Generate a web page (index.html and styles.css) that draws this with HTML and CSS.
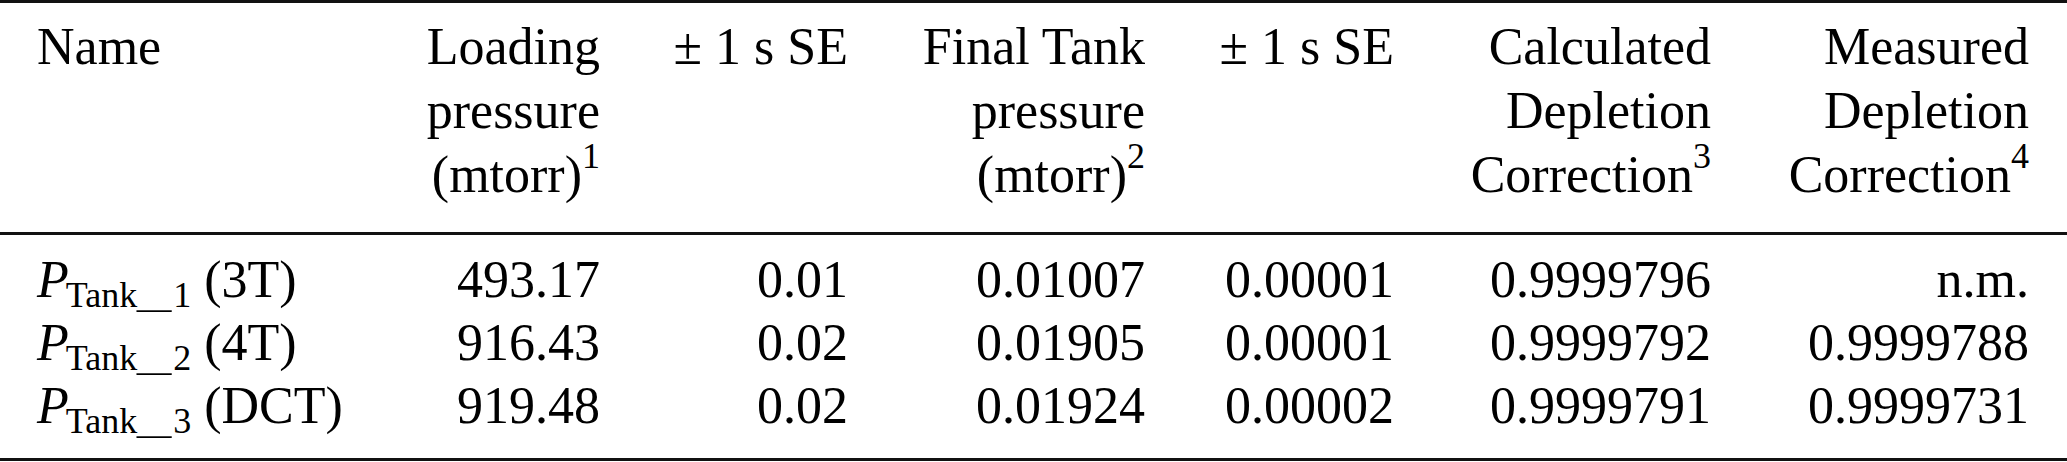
FILE: index.html
```html
<!DOCTYPE html>
<html lang="en">
<head>
<meta charset="utf-8">
<title>Tank pressures</title>
<link rel="stylesheet" href="styles.css">
</head>
<body>
<table class="tbl">
  <colgroup>
    <col class="c-name">
    <col class="c-load">
    <col class="c-se1">
    <col class="c-final">
    <col class="c-se2">
    <col class="c-calc">
    <col class="c-meas">
  </colgroup>
  <thead>
    <tr>
      <th class="name">Name</th>
      <th>Loading<br>pressure<br>(mtorr)<sup class="sup">1</sup></th>
      <th>± 1 s SE</th>
      <th>Final Tank<br>pressure<br>(mtorr)<sup class="sup">2</sup></th>
      <th>± 1 s SE</th>
      <th>Calculated<br>Depletion<br>Correction<sup class="sup">3</sup></th>
      <th class="last">Measured<br>Depletion<br>Correction<sup class="sup">4</sup></th>
    </tr>
  </thead>
  <tbody>
    <tr class="row-first">
      <td class="name"><i class="p">P</i><sub class="sub">Tank<span class="us">_</span>1</sub> (3T)</td>
      <td>493.17</td>
      <td>0.01</td>
      <td>0.01007</td>
      <td>0.00001</td>
      <td>0.9999796</td>
      <td class="last">n.m.</td>
    </tr>
    <tr>
      <td class="name"><i class="p">P</i><sub class="sub">Tank<span class="us">_</span>2</sub> (4T)</td>
      <td>916.43</td>
      <td>0.02</td>
      <td>0.01905</td>
      <td>0.00001</td>
      <td>0.9999792</td>
      <td class="last">0.9999788</td>
    </tr>
    <tr class="row-last">
      <td class="name"><i class="p">P</i><sub class="sub">Tank<span class="us">_</span>3</sub> (DCT)</td>
      <td>919.48</td>
      <td>0.02</td>
      <td>0.01924</td>
      <td>0.00002</td>
      <td>0.9999791</td>
      <td class="last">0.9999731</td>
    </tr>
  </tbody>
</table>
</body>
</html>
```
FILE: styles.css
```css
html, body {
  margin: 0;
  padding: 0;
  background: #ffffff;
}

body {
  font-family: "Liberation Serif", "Times New Roman", serif;
  font-size: 52px;
  color: #000000;
}

.tbl {
  width: 2067px;
  table-layout: fixed;
  border-collapse: separate;
  border-spacing: 0;
  border-top: 3px solid #111111;
  border-bottom: 3px solid #111111;
}

.c-name  { width: 370px; }
.c-load  { width: 230px; }
.c-se1   { width: 248px; }
.c-final { width: 297px; }
.c-se2   { width: 249px; }
.c-calc  { width: 317px; }
.c-meas  { width: 356px; }

.tbl th {
  font-weight: normal;
  text-align: right;
  vertical-align: top;
  line-height: 64px;
  padding: 12px 0 25px 0;
  border-bottom: 3px solid #111111;
  white-space: nowrap;
}

.tbl td {
  text-align: right;
  vertical-align: top;
  line-height: 63px;
  padding: 0;
  white-space: nowrap;
}

.tbl .name {
  text-align: left;
  padding-left: 37px;
}

.tbl .last {
  padding-right: 38px;
}

.tbl .row-first td {
  padding-top: 13px;
}

.tbl .row-last td {
  padding-bottom: 21px;
}

.sup {
  font-size: 36px;
  line-height: 0;
  vertical-align: 24px;
}

.p {
  font-style: italic;
}

.sub {
  font-size: 36px;
  line-height: 0;
  vertical-align: -10px;
  margin-left: -3px;
}

.us {
  display: inline-block;
  transform: scaleX(1.9);
  transform-origin: left center;
  margin-right: 18px;
}
```
